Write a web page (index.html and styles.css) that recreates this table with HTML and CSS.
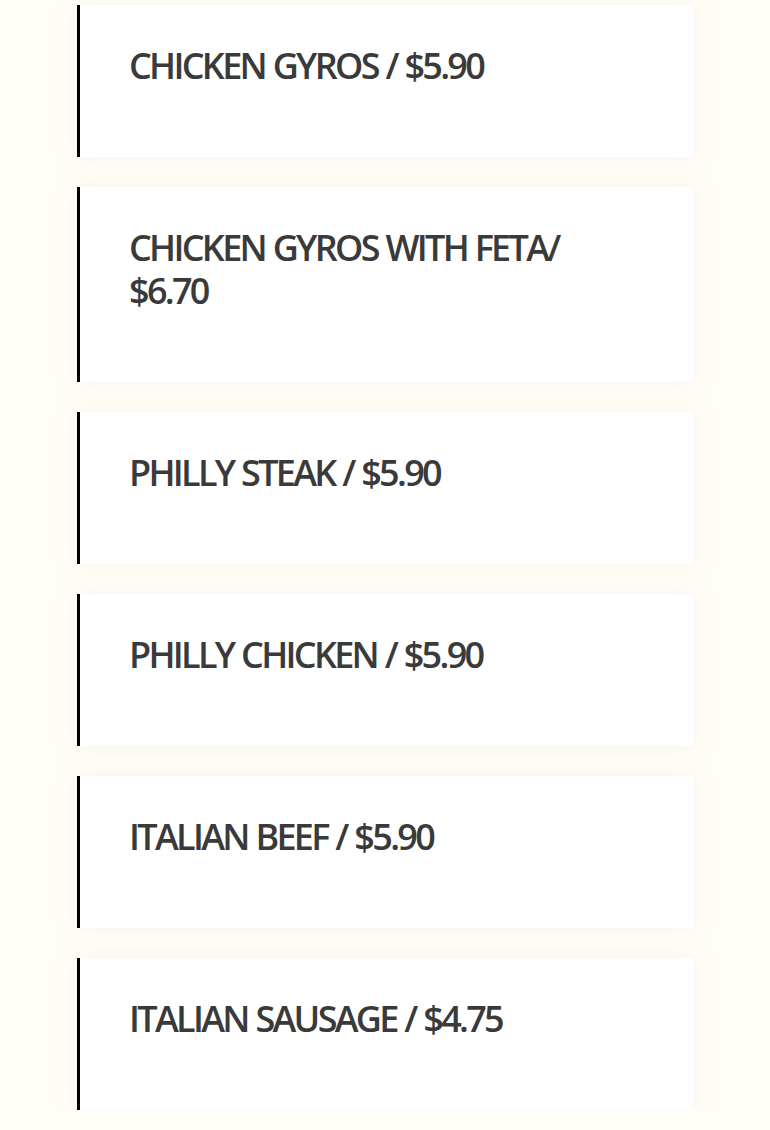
FILE: index.html
```html
<!DOCTYPE html>
<html lang="en">
<head>
    <meta charset="UTF-8">
    <meta name="viewport" content="width=device-width, initial-scale=1.0">
    <title>Menu</title>
    <link rel="stylesheet" href="styles.css">
</head>
<body>
    <main class="menu">
        <section class="item"><h3>CHICKEN GYROS / $5.90</h3></section>
        <section class="item"><h3>CHICKEN GYROS WITH FETA/ $6.70</h3></section>
        <section class="item"><h3>PHILLY STEAK / $5.90</h3></section>
        <section class="item"><h3>PHILLY CHICKEN / $5.90</h3></section>
        <section class="item"><h3>ITALIAN BEEF / $5.90</h3></section>
        <section class="item"><h3>ITALIAN SAUSAGE / $4.75</h3></section>
    </main>
</body>
</html>
```

FILE: styles.css
```css
body {
    margin: 0;
    background-color: #fffdf7;
    font-family: "Open Sans", sans-serif;
    color: #3a3a3a;
}
.menu {
    display: flex;
    flex-direction: column;
    gap: 30px;
    width: 616px;
    margin-left: 77px;
    padding-top: 5px;
}
.item {
    background: #fff;
    border-left: 3px solid #000;
    box-shadow: 0 0 18px rgba(230, 225, 205, 0.35);
    padding: 39px 50px 70px 49px;
}
.item h3 {
    margin: 0;
    font-size: 36px;
    font-weight: 600;
    line-height: 43px;
    letter-spacing: -2.7px;
    word-spacing: 1px;
}
```
